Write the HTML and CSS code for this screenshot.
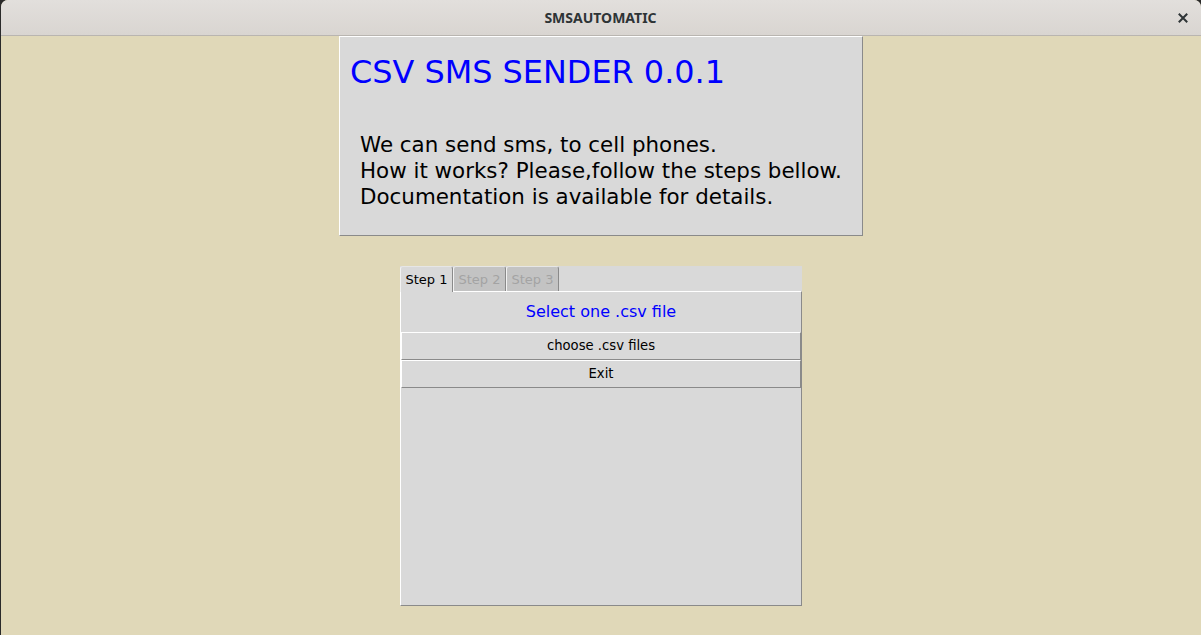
FILE: index.html
```html
<!DOCTYPE html>
<html lang="en">
<head>
<meta charset="utf-8">
<title>SMSAUTOMATIC</title>
<link rel="stylesheet" href="styles.css">
</head>
<body>
<div class="window">
  <header class="titlebar">
    <span class="spacer"></span>
    <span class="title">SMSAUTOMATIC</span>
    <span class="controls">
      <span class="close" aria-label="Close">
        <svg width="10" height="10" viewBox="0 0 10 10"><path d="M1.5 1.5L8.5 8.5M8.5 1.5L1.5 8.5" stroke="#2e3436" stroke-width="2" stroke-linecap="square"/></svg>
      </span>
    </span>
  </header>
  <main class="content">
    <section class="intro">
      <h1 class="intro-title">CSV SMS SENDER 0.0.1</h1>
      <p class="intro-text">We can send sms, to cell phones.<br>How it works? Please,follow the steps bellow.<br>Documentation is available for details.</p>
    </section>
    <div class="notebook">
      <div class="tabs">
        <span class="tab tab-active">Step 1</span>
        <span class="tab tab-disabled">Step 2</span>
        <span class="tab tab-disabled">Step 3</span>
      </div>
      <div class="pane">
        <div class="pane-label">Select one .csv file</div>
        <button class="tk-btn">choose .csv files</button>
        <button class="tk-btn">Exit</button>
      </div>
    </div>
  </main>
</div>
</body>
</html>
```

FILE: styles.css
```css
html, body {
  margin: 0;
  padding: 0;
  height: 100%;
  background: #2a2a2a;
  overflow: hidden;
}

.window {
  margin-left: 1px;
  width: 1200px;
  height: 635px;
  display: flex;
  flex-direction: column;
  background: #e0d8b8;
  border-radius: 7px 7px 0 0;
  overflow: hidden;
}

.titlebar {
  height: 35px;
  flex: none;
  display: grid;
  grid-template-columns: 1fr auto 1fr;
  align-items: center;
  background: linear-gradient(#e2dfdc, #d9d5d1);
  border-bottom: 1px solid #b9b5b0;
}

.title {
  font-family: "Noto Sans", "DejaVu Sans", sans-serif;
  font-weight: bold;
  font-size: 14px;
  color: #2e3436;
  margin-left: -1px;
}

.controls {
  display: flex;
  justify-content: flex-end;
  padding-right: 13px;
}

.close {
  display: flex;
  width: 10px;
  height: 10px;
  margin-top: 1px;
}

.content {
  flex: 1;
  display: flex;
  flex-direction: column;
  align-items: center;
  font-family: "DejaVu Sans", sans-serif;
}

.intro {
  box-sizing: border-box;
  width: 524px;
  height: 200px;
  background: #d9d9d9;
  border-top: 1px solid #ffffff;
  border-left: 1px solid #ffffff;
  border-right: 1px solid #8a8a8a;
  border-bottom: 1px solid #8a8a8a;
  padding: 17px 0 0 10px;
}

.intro-title {
  margin: 0;
  font-weight: normal;
  font-size: 31.9px;
  line-height: 37px;
  color: #0000ff;
}

.intro-text {
  margin: 41px 0 0 10px;
  font-size: 21.4px;
  line-height: 26px;
  color: #000000;
}

.notebook {
  margin-top: 30px;
  width: 402px;
  display: flex;
  flex-direction: column;
}

.tabs {
  height: 25px;
  display: flex;
  background: #d9d9d9;
  font-size: 13px;
}

.tab {
  box-sizing: border-box;
  width: 53px;
  height: 25px;
  display: flex;
  align-items: center;
  justify-content: center;
  border-top: 1px solid #e6e6e6;
  border-left: 1px solid #f2f2f2;
  border-right: 1px solid #8a8a8a;
  border-radius: 3px 3px 0 0;
}

.tab-active {
  background: #d9d9d9;
  color: #000000;
  height: 26px;
  margin-bottom: -1px;
  position: relative;
  z-index: 1;
  padding-bottom: 1px;
}

.tab-disabled {
  background: #c3c3c3;
  color: #a3a3a3;
}

.pane {
  box-sizing: border-box;
  height: 315px;
  background: #d9d9d9;
  border-top: 1px solid #ffffff;
  border-left: 1px solid #ffffff;
  border-right: 1px solid #8a8a8a;
  border-bottom: 1px solid #8a8a8a;
  display: flex;
  flex-direction: column;
}

.pane-label {
  height: 40px;
  line-height: 40px;
  text-align: center;
  font-size: 16px;
  color: #0000ff;
}

.tk-btn {
  box-sizing: border-box;
  height: 28px;
  width: 100%;
  margin: 0;
  padding: 0 0 1px;
  background: #d9d9d9;
  border-top: 1px solid #ffffff;
  border-left: 1px solid #ffffff;
  border-right: 1px solid #8a8a8a;
  border-bottom: 1px solid #8a8a8a;
  border-radius: 0;
  font-family: "DejaVu Sans", sans-serif;
  font-size: 13.2px;
  color: #000000;
  text-align: center;
}
```
